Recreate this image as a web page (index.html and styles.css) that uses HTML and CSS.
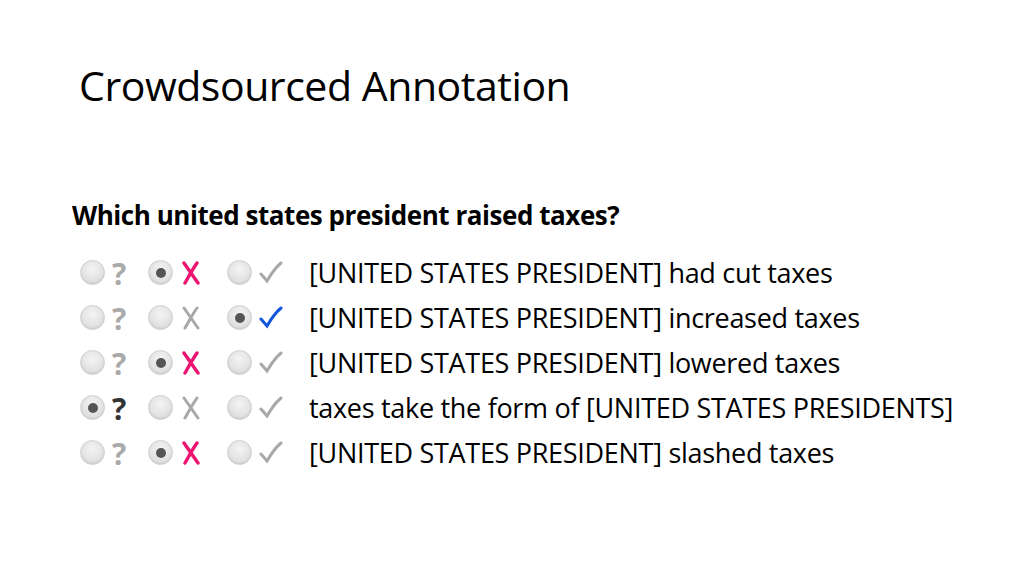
FILE: index.html
```html
<!DOCTYPE html>
<html>
<head>
  <title>Crowdsourced Annotation</title>
  <link rel="stylesheet" href="styles.css">
</head>
<body>

<h1 class="title">Crowdsourced Annotation</h1>

<div class="task">
  <h2 class="question">Which united states president raised taxes?</h2>

  <div class="rows">
    <div class="row">
      <span class="radio"></span><span class="mark q">?</span>
      <span class="radio on"></span><svg class="mark x pink" viewBox="0 0 20 24"><path d="M3 2 C8 9 12 15 17 22 M16 2 C11 9 8 15 4 22"/></svg>
      <span class="radio"></span><svg class="mark ck" viewBox="0 0 24 24"><path d="M2 13 L8 20 C12 13 16 7 22 2"/></svg>
      <span class="text">[UNITED STATES PRESIDENT] had cut taxes</span>
    </div>
    <div class="row">
      <span class="radio"></span><span class="mark q">?</span>
      <span class="radio"></span><svg class="mark x" viewBox="0 0 20 24"><path d="M3 2 C8 9 12 15 17 22 M16 2 C11 9 8 15 4 22"/></svg>
      <span class="radio on"></span><svg class="mark ck blue" viewBox="0 0 24 24"><path d="M2 13 L8 20 C12 13 16 7 22 2"/></svg>
      <span class="text">[UNITED STATES PRESIDENT] increased taxes</span>
    </div>
    <div class="row">
      <span class="radio"></span><span class="mark q">?</span>
      <span class="radio on"></span><svg class="mark x pink" viewBox="0 0 20 24"><path d="M3 2 C8 9 12 15 17 22 M16 2 C11 9 8 15 4 22"/></svg>
      <span class="radio"></span><svg class="mark ck" viewBox="0 0 24 24"><path d="M2 13 L8 20 C12 13 16 7 22 2"/></svg>
      <span class="text">[UNITED STATES PRESIDENT] lowered taxes</span>
    </div>
    <div class="row">
      <span class="radio on"></span><span class="mark q dark">?</span>
      <span class="radio"></span><svg class="mark x" viewBox="0 0 20 24"><path d="M3 2 C8 9 12 15 17 22 M16 2 C11 9 8 15 4 22"/></svg>
      <span class="radio"></span><svg class="mark ck" viewBox="0 0 24 24"><path d="M2 13 L8 20 C12 13 16 7 22 2"/></svg>
      <span class="text">taxes take the form of [UNITED STATES PRESIDENTS]</span>
    </div>
    <div class="row">
      <span class="radio"></span><span class="mark q">?</span>
      <span class="radio on"></span><svg class="mark x pink" viewBox="0 0 20 24"><path d="M3 2 C8 9 12 15 17 22 M16 2 C11 9 8 15 4 22"/></svg>
      <span class="radio"></span><svg class="mark ck" viewBox="0 0 24 24"><path d="M2 13 L8 20 C12 13 16 7 22 2"/></svg>
      <span class="text">[UNITED STATES PRESIDENT] slashed taxes</span>
    </div>
  </div>
</div>

</body>
</html>
```

FILE: styles.css
```css
body {
  margin: 0;
  background: #fff;
  font-family: "Open Sans", sans-serif;
  color: #000;
}
.title {
  margin: 0;
  padding: 58px 0 0 79px;
  font-weight: 400;
  font-size: 41px;
  line-height: 54px;
  letter-spacing: -0.45px;
}
.task {
  padding: 86px 0 0 72px;
}
.question {
  margin: 0;
  font-size: 26px;
  font-weight: 700;
  line-height: 34px;
  letter-spacing: -0.45px;
}
.rows {
  margin-top: 18px;
  padding-left: 8px;
}
.row {
  display: flex;
  align-items: center;
  height: 45px;
}
.radio {
  width: 25px;
  height: 25px;
  border-radius: 50%;
  box-sizing: border-box;
  border: 1px solid #cfcfcf;
  background: radial-gradient(circle at 50% 35%, #f4f4f4 0%, #e2e2e2 60%, #d4d4d4 100%);
  box-shadow: inset 0 -1px 2px rgba(0,0,0,0.08);
  display: flex;
  align-items: center;
  justify-content: center;
}
.radio.on::after {
  content: "";
  width: 10px;
  height: 10px;
  border-radius: 50%;
  background: #555;
}
.mark {
  width: 20px;
  height: 24px;
  margin-left: 8px;
  margin-right: 23px;
}
.q {
  font-size: 30px;
  font-weight: 700;
  color: #aaa;
  line-height: 26px;
  width: 15px;
  margin-left: 7px;
  margin-right: 21px;
}
.q.dark { color: #333; }
svg.mark path {
  fill: none;
  stroke: #a8a8a8;
  stroke-width: 3;
  stroke-linecap: round;
}
svg.x { margin-right: 26px; }
svg.pink path { stroke: #ec1470; stroke-width: 3.4; }
svg.ck { width: 24px; margin-left: 7px; margin-right: 26px; }
svg.blue path { stroke: #1155dd; }
.text {
  font-size: 27px;
  letter-spacing: -0.3px;
}
```
